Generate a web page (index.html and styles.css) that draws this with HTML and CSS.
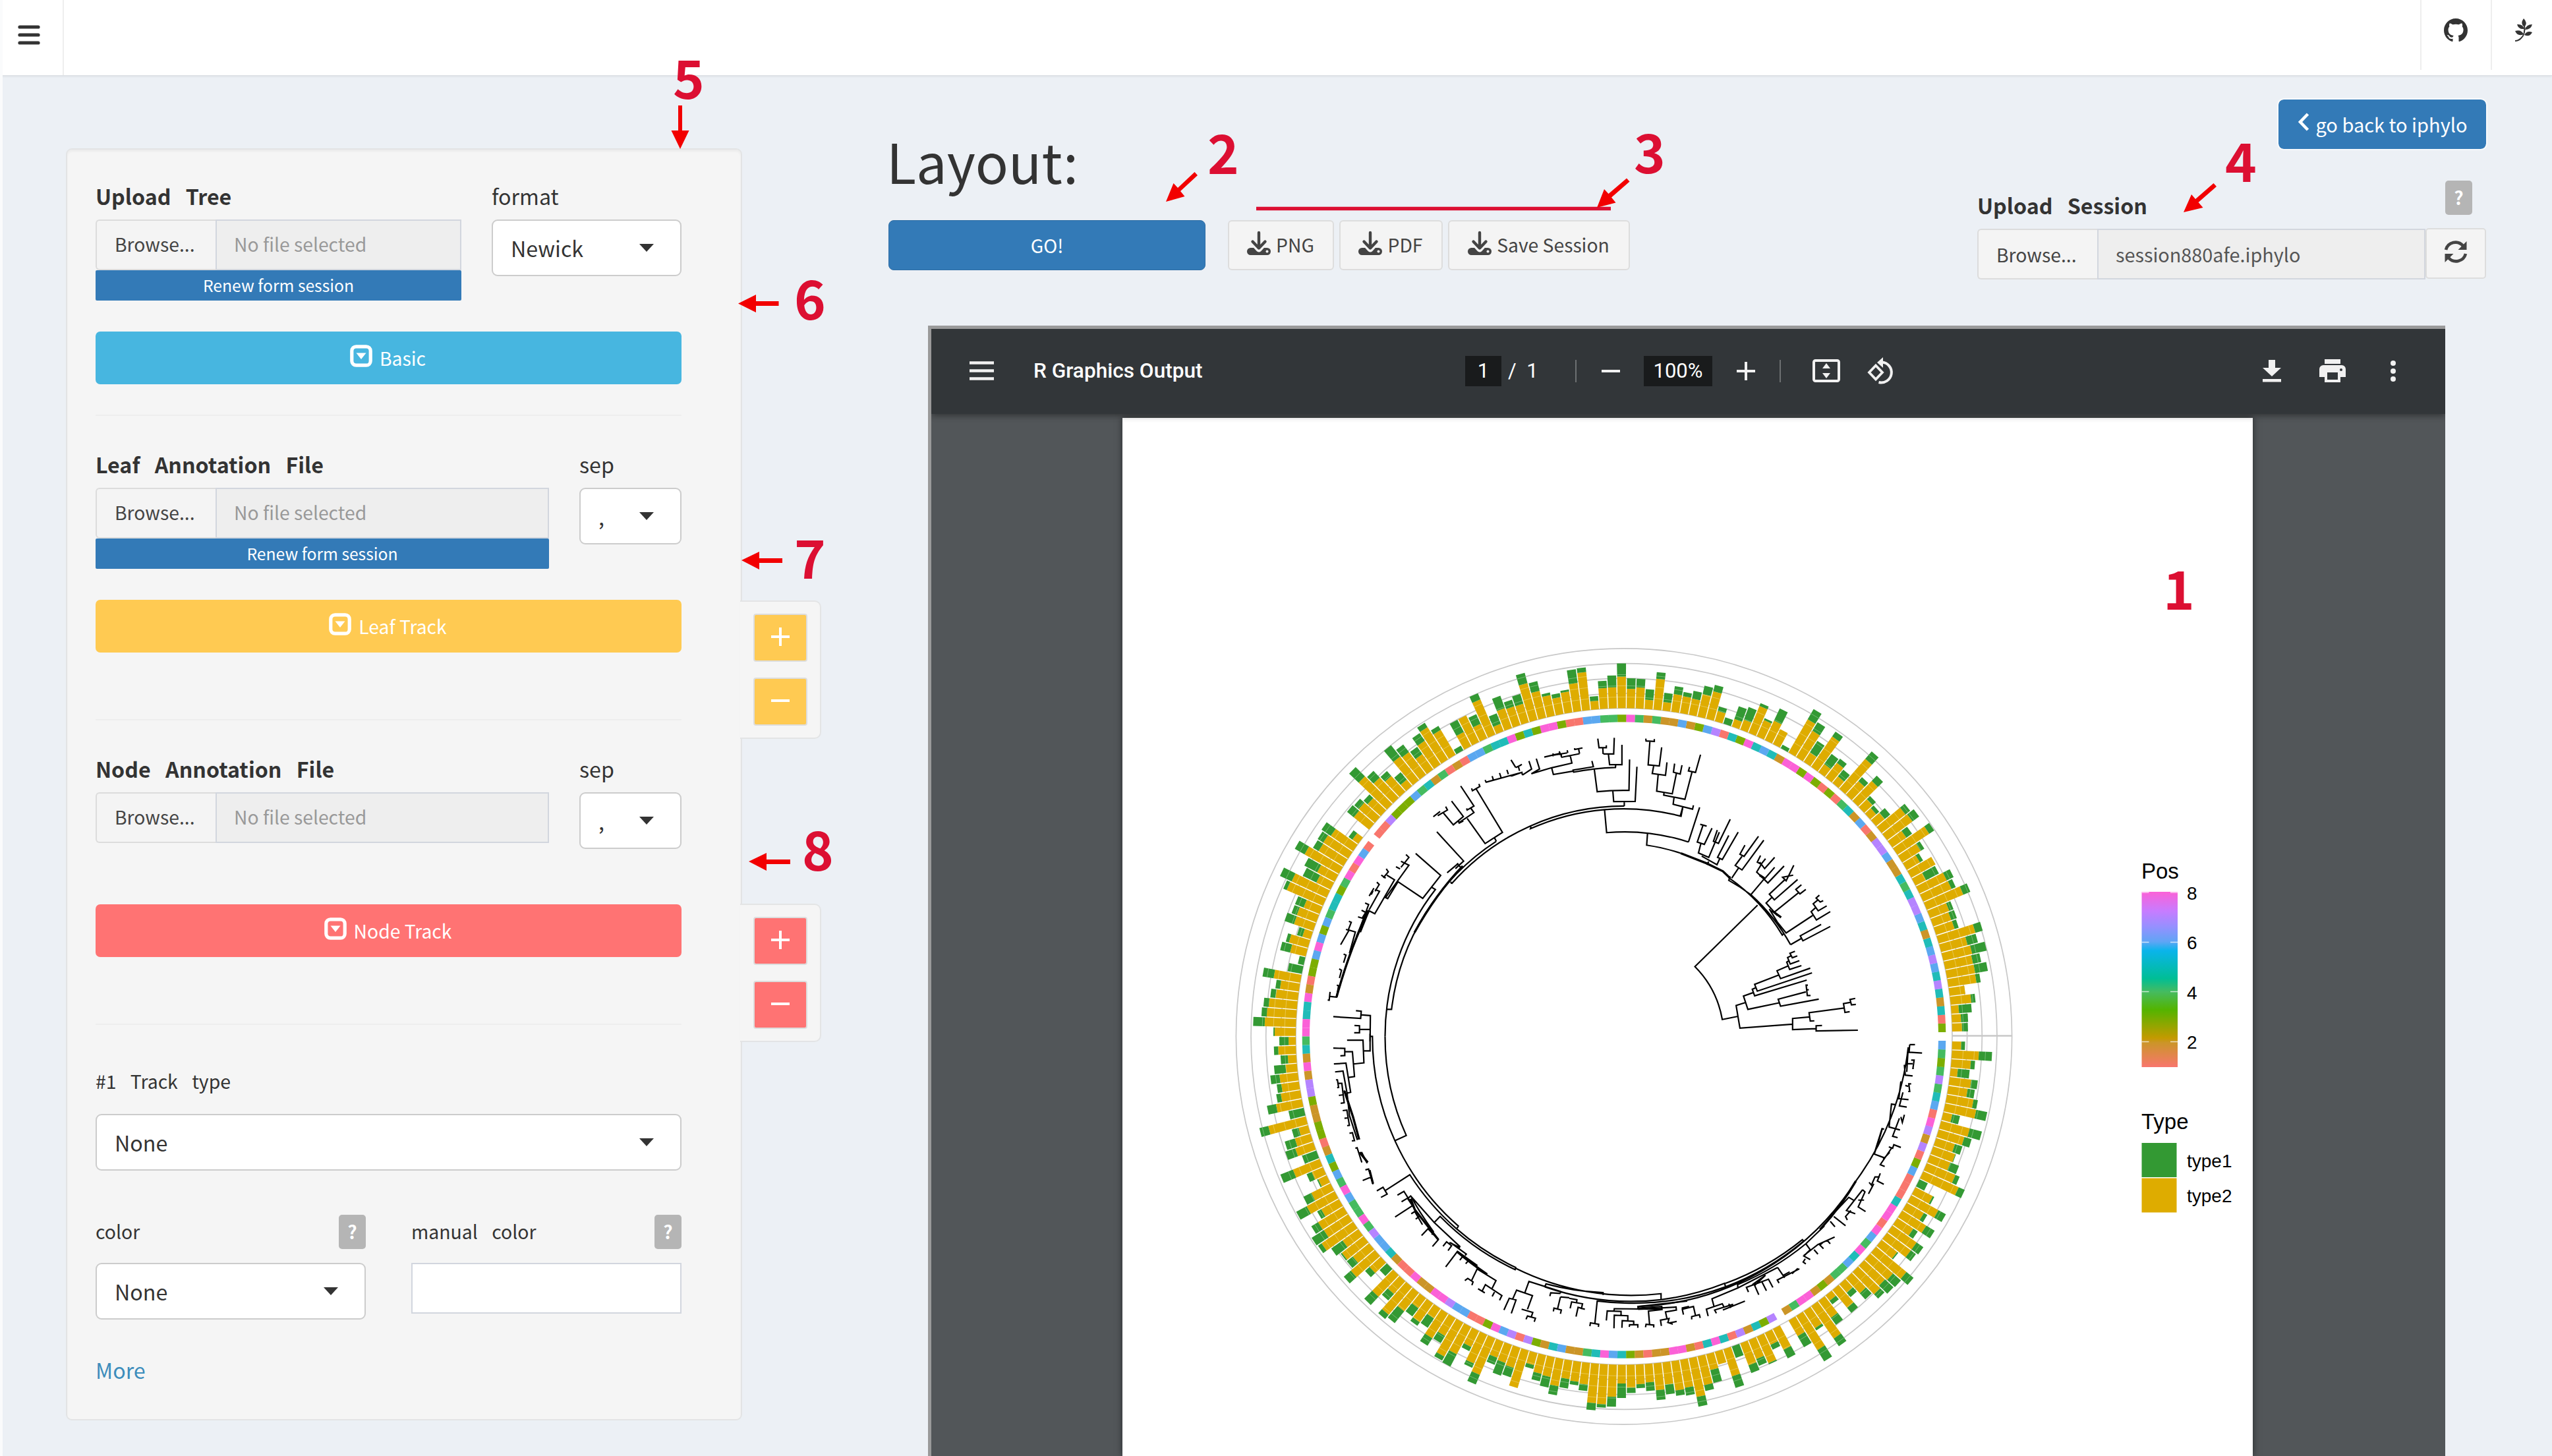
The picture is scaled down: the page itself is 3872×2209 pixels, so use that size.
FILE: index.html
```html
<!DOCTYPE html>
<html lang="en">
<head>
<meta charset="utf-8">
<title>iphylo</title>
<link rel="stylesheet" href="styles.css">
</head>
<body>
<svg class="defs" width="0" height="0">
  <symbol id="i-toggle" viewBox="0 0 34 34"><rect x="2.8" y="2.8" width="28.4" height="28.4" rx="6.5" fill="none" stroke="#fff" stroke-width="5.2"/><path d="M9.5 12.5h15L17 22z" fill="#fff"/></symbol>
  <symbol id="i-down" viewBox="0 0 38 38"><path d="M6.500 26h25a5.500 5.500 0 0 1 0 11h-25a5.500 5.500 0 0 1 0-11z" fill="#444"/><path d="M9 17l10 11 10-11" fill="none" stroke="#f4f4f4" stroke-width="9" stroke-linejoin="round"/><path d="M19 3v22M9.500 16.500L19 26.500l9.500-10" fill="none" stroke="#444" stroke-width="4.400" stroke-linecap="round" stroke-linejoin="round"/><circle cx="31.500" cy="31.500" r="2" fill="#f4f4f4"/></symbol>
</svg>

<header class="topbar">
  <div class="topbar-menu">
    <svg width="34" height="30" viewBox="0 0 34 30"><path d="M3 3h28M3 15h28M3 27h28" stroke="#333" stroke-width="5.200" stroke-linecap="round"/></svg>
  </div>
  <div class="topbar-links">
    <div class="topbar-link"><svg width="36" height="36" viewBox="0 0 16 16"><path fill="#333" d="M8 0C3.580 0 0 3.580 0 8c0 3.540 2.290 6.530 5.470 7.590.4.070.55-.17.55-.38 0-.19-.01-.82-.01-1.490-2.010.37-2.530-.49-2.690-.94-.09-.23-.48-.94-.82-1.130-.28-.15-.68-.52-.01-.53.63-.01 1.080.58 1.230.82.72 1.210 1.870.87 2.330.66.070-.52.280-.87.510-1.070-1.780-.2-3.640-.89-3.640-3.950 0-.87.310-1.590.82-2.150-.08-.2-.36-1.020.08-2.120 0 0 .67-.21 2.200.82.640-.18 1.320-.27 2-.27.680 0 1.360.09 2 .27 1.530-1.040 2.200-.82 2.200-.82.440 1.100.160 1.920.080 2.120.510.560.820 1.270.820 2.150 0 3.070-1.870 3.750-3.650 3.950.290.250.540.730.540 1.480 0 1.070-.01 1.930-.01 2.200 0 .210.150.460.550.380A8.013 8.013 0 0 0 16 8c0-4.420-3.580-8-8-8z"/></svg></div>
    <div class="topbar-link leaf"><svg width="30" height="36" viewBox="0 0 30 36"><g fill="#333"><path d="M14 0q7 7 1 13q-7-5-1-13zM4 9q9-1 11 7q-9 1-11-7zM27 9q-9 0-11 8q9 0 11-8zM1 19q9-3 13 5q-9 4-13-5zM27 21q-8-3-12 4q8 4 12-4z"/></g><path d="M15 10q2 14-5 20q-4 4-9 4" fill="none" stroke="#333" stroke-width="2"/></svg></div>
  </div>
</header>

<main class="layout">
  <section class="sidebar">
    <div class="row row-tree">
      <div class="field">
        <label class="label strong">Upload Tree</label>
        <div class="file"><span class="browse">Browse...</span><span class="filename">No file selected</span></div>
        <button class="renew">Renew form session</button>
      </div>
      <div class="field">
        <label class="label">format</label>
        <div class="select"><span>Newick</span><i class="caret"></i></div>
      </div>
    </div>
    <button class="track basic"><svg width="34" height="34"><use href="#i-toggle"/></svg>Basic</button>
    <hr class="rule near">

    <div class="row row-annot">
      <div class="field">
        <label class="label strong">Leaf Annotation File</label>
        <div class="file"><span class="browse">Browse...</span><span class="filename">No file selected</span></div>
        <button class="renew">Renew form session</button>
      </div>
      <div class="field">
        <label class="label">sep</label>
        <div class="select"><span>,</span><i class="caret"></i></div>
      </div>
    </div>
    <button class="track leaf-track"><svg width="34" height="34"><use href="#i-toggle"/></svg>Leaf Track</button>
    <hr class="rule">

    <div class="row row-annot">
      <div class="field">
        <label class="label strong">Node Annotation File</label>
        <div class="file"><span class="browse">Browse...</span><span class="filename">No file selected</span></div>
      </div>
      <div class="field">
        <label class="label">sep</label>
        <div class="select"><span>,</span><i class="caret"></i></div>
      </div>
    </div>
    <button class="track node-track"><svg width="34" height="34"><use href="#i-toggle"/></svg>Node Track</button>
    <hr class="rule">

    <label class="label small track-type">#1 Track type</label>
    <div class="select"><span>None</span><i class="caret"></i></div>
    <div class="row row-color">
      <div class="field">
        <div class="label-line"><label class="label small">color</label><span class="help">?</span></div>
        <div class="select"><span>None</span><i class="caret"></i></div>
      </div>
      <div class="field">
        <div class="label-line"><label class="label small">manual color</label><span class="help">?</span></div>
        <div class="input"></div>
      </div>
    </div>
    <a class="more">More</a>
  </section>

  <aside class="tabs">
    <div class="tab yellow">
      <button class="step"><svg width="30" height="30"><path d="M1 15h28M15 1v28" stroke="#fff" stroke-width="4"/></svg></button>
      <button class="step"><svg width="30" height="30"><path d="M1 15h28" stroke="#fff" stroke-width="4"/></svg></button>
    </div>
    <div class="tab red">
      <button class="step"><svg width="30" height="30"><path d="M1 15h28M15 1v28" stroke="#fff" stroke-width="4"/></svg></button>
      <button class="step"><svg width="30" height="30"><path d="M1 15h28" stroke="#fff" stroke-width="4"/></svg></button>
    </div>
  </aside>

  <section class="content">
    <div class="controls">
      <div class="actions">
        <h1 class="title">Layout:</h1>
        <div class="buttons">
          <button class="go">GO!</button>
          <button class="btn png"><svg width="38" height="38"><use href="#i-down"/></svg>PNG</button>
          <button class="btn pdf"><svg width="38" height="38"><use href="#i-down"/></svg>PDF</button>
          <button class="btn save"><svg width="38" height="38"><use href="#i-down"/></svg>Save Session</button>
        </div>
      </div>
      <div class="session">
        <button class="back"><svg width="20" height="30" viewBox="0 0 20 30"><path d="M16.500 3L5 15l11.500 12" fill="none" stroke="#fff" stroke-width="4.600"/></svg>go back to iphylo</button>
        <div class="session-head"><label class="label strong">Upload Session</label><span class="help">?</span></div>
        <div class="session-row">
          <div class="file"><span class="browse">Browse...</span><span class="filename dark">session880afe.iphylo</span></div>
          <button class="refresh"><svg width="36" height="36" viewBox="0 0 36 36"><g fill="none" stroke="#444" stroke-width="4.600"><path d="M3 15A15 15 0 0 1 29 9"/><path d="M33 21A15 15 0 0 1 7 27"/></g><path d="M34.500 2v13h-13zM1.500 34V21h13z" fill="#444"/></svg></button>
        </div>
      </div>
    </div>

    <div class="viewer">
      <div class="toolbar">
        <svg class="t-menu" width="37" height="29"><path d="M0 2.500h37M0 14.500h37M0 26.500h37" stroke="#f1f1f1" stroke-width="4.400"/></svg>
        <span class="t-title">R Graphics Output</span>
        <span class="t-box page-no">1</span>
        <span class="t-total">/&nbsp; 1</span>
        <i class="t-sep"></i>
        <svg class="t-minus" width="28" height="28"><path d="M0 14h28" stroke="#f1f1f1" stroke-width="4"/></svg>
        <span class="t-box zoom">100%</span>
        <svg class="t-plus" width="28" height="28"><path d="M0 14h28M14 0v28" stroke="#f1f1f1" stroke-width="4"/></svg>
        <i class="t-sep second"></i>
        <svg class="t-fit" width="42" height="35"><rect x="2" y="2" width="38" height="31" rx="2.500" fill="none" stroke="#f1f1f1" stroke-width="4"/><path d="M21 6l6 8H15zM21 29l6-8H15z" fill="#f1f1f1"/></svg>
        <svg class="t-rotate" width="42" height="42" viewBox="0 0 42 42"><path d="M13 12.500L23 23 13 33.500 3 23z" fill="none" stroke="#f1f1f1" stroke-width="3.800"/><path d="M22 7.500A15.500 15.500 0 1 1 17.500 38" fill="none" stroke="#f1f1f1" stroke-width="4"/><path d="M24 0v16l-9-8z" fill="#f1f1f1"/></svg>
        <span class="t-right">
          <svg width="28" height="34"><path d="M9 0h10v12h9L14 25 0 12h9zM0 29h28v4.500H0z" fill="#f1f1f1"/></svg>
          <svg width="40" height="35"><path d="M8 0h24v7H8zM6 9h28a6 6 0 0 1 6 6v12h-8v8H8v-8H0V15a6 6 0 0 1 6-6z" fill="#f1f1f1"/><path d="M12 20h16v11H12z" fill="#323639"/><circle cx="33" cy="16" r="2" fill="#323639"/></svg>
          <svg width="12" height="34"><g fill="#f1f1f1"><circle cx="6" cy="5" r="4"/><circle cx="6" cy="17" r="4"/><circle cx="6" cy="29" r="4"/></g></svg>
        </span>
      </div>
      <div class="canvas">
        <div class="paper">
          <svg class="chart" viewBox="1703 634 1715 1575">
            <defs>
              <linearGradient id="pos" x1="0" y1="0" x2="0" y2="1">
                <stop offset="0" stop-color="#fb61d7"/><stop offset=".11" stop-color="#c77cff"/><stop offset=".2" stop-color="#9590ff"/><stop offset=".285" stop-color="#5fa5f5"/><stop offset=".335" stop-color="#0ab4eb"/><stop offset=".495" stop-color="#00be95"/><stop offset=".57" stop-color="#45bb60"/><stop offset=".672" stop-color="#53b400"/><stop offset=".835" stop-color="#c49a00"/><stop offset=".86" stop-color="#cb9528"/><stop offset="1" stop-color="#f8766d"/>
              </linearGradient>
            </defs>
            <g id="grid" fill="none" stroke="#c8c8c8" stroke-width="1.700"></g>
            <g id="bars"></g>
            <g id="tiles"></g>
            <g class="tree">
              <g transform="translate(1860 960) scale(.4464 .3954)">
                <path d="M1320 403L1318 465H1283M1264 406L1268 441H1293V432M1281 441L1282 465M1300 465L1304 506H1346V430M1325 506L1324 517A918 1032 0 0 0 1182 535L1180 527L1249 514L1244 492M1252 523L1262 610A836 945 0 0 1 1370 605L1372 486M1315 606L1318 648L1391 647L1397 514M1354 648V665"/>
                <path d="M1107 518L1113 544L1181 531M1038 541L1107 518L1176 500L1170 470M1140 478L1202 464M1140 466V478M1199 447L1202 464M1185 448L1212 442M1185 443L1186 450M1162 461L1160 451M1110 470L1160 461M1082 477L1135 463M1133 455L1138 470M1112 463V474M1038 541L1066 523L1055 483M1008 546L1039 523L1030 492M1008 546L1006 536L885 573M970 550L1008 535M998 530L994 513L1006 505M985 517L1004 507M985 517L969 488M960 543L955 526M935 555L930 538M910 568L905 550M885 575L881 565"/>
                <path d="M835 597L838 606L863 590L860 580M851 600L940 766L881 809L820 712M798 588L843 665L820 680L818 674M833 674L843 690L793 728M790 722L793 730L807 722M767 646L807 705L773 737L738 690M747 667L753 680L720 702M705 706L728 686M912 785L919 800M717 764L808 876L780 905M752 921L790 885M785 885L802 905"/>
                <path d="M645 847L730 931L669 1019L582 953M612 851L622 862L595 900M578 898L592 906M595 877L622 892L543 1016L550 1020L585 955M545 906L552 917L535 940M528 930L543 942M547 930L573 948L506 1078L483 1065M513 957L521 966L507 992M507 985L522 992L487 1063M487 1010L503 980M494 1005L500 990M473 1037L485 1043L452 1145L458 1147L487 1065M461 1065L475 1073L463 1095L449 1090M418 1107L426 1111L416 1140L440 1148L421 1225L427 1222M408 1138L418 1142L390 1197M400 1233L408 1237L400 1266M385 1290L393 1295L386 1325M377 1352L383 1355L376 1398L351 1395M354 1378L351 1410L346 1409M697 975L712 985A812 917 0 0 0 541 1549M919 800A794 896 0 0 0 563 1445H547"/>
                <path class="thick" d="M485 1068Q425 1200 376 1398M805 895Q715 1000 641 1150M482 1065L445 1165"/>
                <path d="M767 963L764 955M767 963A783 884 0 0 1 1354 665M1037 744L1035 752A773 873 0 0 1 1547 704L1552 675M1287 680L1294 767A695 784 0 0 1 1572 803M442 1450L460 1452L458 1480L365 1473M458 1466L491 1469L490 1568M437 1507L454 1508V1535H436M454 1522H490M412 1563H466"/>
              </g>
              <g transform="translate(2460 960) scale(.4464 .3954)">
                <path d="M83 406L84 415L112 417V408M97 416L91 507L129 511L137 440M110 510L105 540L150 547L155 497M125 545L120 608L173 618L187 540M181 502L177 535L200 542L206 508M145 613L144 623L216 639L240 535M232 515L228 530L252 536L269 468M179 632L176 658L242 677L245 662M209 668L200 704M266 670L228 803M89 768L86 815A654 738 0 0 1 202 846M268 735L290 742M278 737L258 803L282 812L308 750M270 810L262 845L297 862L333 765M326 757L313 800L330 808L370 716M273 857L325 890L335 865M365 778L327 862L343 870L397 765M290 890L297 878"/>
                <path d="M420 815L403 850L417 858L466 781M410 858L387 893L410 910L484 796M398 903L375 942M473 855L462 880L475 888L490 867M470 880L487 905L521 862M475 890L460 918L498 960L553 895M521 900L490 940M586 892L560 952L548 938L584 930M558 945L503 1003L520 1025L599 947M512 1015L492 1037L530 1085M520 1072L605 995M612 967L593 985L607 1002L627 985M485 945L440 1005A648 731 0 0 0 365 950L370 935M365 940A638 721 0 0 1 547 1160L552 1154M575 1197A648 731 0 0 0 440 1005M503 1060L530 1110L560 1152L650 1085M673 1007L662 1018L676 1033L686 1028M668 1025L652 1040L669 1067L698 1048M660 1055L645 1070L663 1102L710 1070M575 1197L612 1173M679 1119L608 1163L617 1182L710 1127"/>
                <path class="thick" d="M202 846L290 885L345 915L370 942M510 1065L543 1092M470 930L490 945"/>
                <path d="M463 1045L250 1281A338 382 0 0 1 343 1484L396 1472M422 1419L390 1430L403 1517L582 1502M640 1474L582 1480V1523L662 1519M682 1507L662 1508V1528L804 1525M757 1440L638 1458L642 1490L656 1489M780 1418L755 1423L760 1457L776 1454M795 1403L777 1407L782 1428L797 1426M450 1380L415 1394L430 1445L536 1420M627 1378L533 1406L541 1433L671 1406M634 1352H628L632 1392H643M630 1370H637M457 1362L445 1368L453 1393L630 1333M535 1313L453 1349L462 1375L648 1305M568 1278L529 1297L541 1327L642 1287M570 1258L562 1264L572 1292L612 1277M577 1239L565 1246L574 1271L605 1258M590 1222L573 1230L581 1247L598 1240"/>
              </g>
              <g transform="translate(1860 1560) scale(.4464 .4139)">
                <path d="M490 20V83H470M365 73L404 74V100L389 101M404 86H430L437 177L414 181M412 44H466L469 127L434 131M490 30H498A854 921 0 0 0 790 725L786 733M541 30A812 876 0 0 0 613 393L575 412M367 131L408 128L424 235L412 238M371 160L398 157L413 245M374 189H379L383 217L378 218M381 202H394L402 273L390 275M384 246L400 244M402 228L430 318M412 240L420 320L447 410M397 302L411 300L420 358M403 330L418 328M412 357L422 356M420 385L430 383L437 412L428 413M440 440L446 438L462 492M450 458L462 456L480 495M474 519L485 516L500 572M465 558L495 545"/>
                <path class="thick" d="M403 230L432 325L453 408M455 455L482 492M488 520L500 570"/>
                <path d="M513 596L534 583L548 608L527 620M543 594L625 537A867 935 0 0 0 985 877L983 885A874 942 0 0 1 728 690L708 712M583 612L605 598L635 650L575 692M597 636L617 623L640 660M617 625L628 615L708 712L795 800L793 805M630 617Q655 670 705 745L700 757M630 680L642 672L668 720M645 700L657 690M665 760L687 735L722 775L702 800M738 799L750 783L767 797L755 815M760 785L795 804M765 787L817 828L813 833M747 875L787 818L855 870M855 883L918 925L905 953M795 850L806 835M815 863L826 850M855 880L835 925M812 925L822 917L840 930L836 942M857 955L880 970M870 965L882 940L938 980L930 997M905 983L913 967"/>
                <path class="thick" d="M628 625L642 665L722 775M787 820Q830 860 888 902"/>
                <path d="M945 1033L963 990L986 996L970 1045M975 992L988 960L1042 980L1025 1030M1005 1030L1043 1042L1038 1058M1020 1067L1025 1055L1052 1063L1048 1076M1016 970L1030 928L1137 965V972M985 880A883 952 0 0 0 1479 973V995M1084 948L1088 937A883 955 0 0 0 1282 969V978M1084 948A900 970 0 0 0 1479 995M1101 982L1104 970L1137 972M1137 985L1127 1030M1113 1038L1115 1026L1140 1033L1137 1047M1137 985L1167 988M1170 1027L1175 1003L1212 1010L1208 1030M1190 1057L1197 1023L1220 1030M1167 990L1193 995L1192 1005M1237 1092L1239 1080L1267 1085L1266 1095M1254 1082L1262 1000A905 976 0 0 0 1353 1007M1293 1071L1296 1036L1343 1038V1053M1319 1100L1320 1052L1366 1054V1072M1346 1098L1347 1072L1386 1074V1087M1371 1095L1372 1087H1400V1098M1319 1036L1320 1028L1481 1030V1020L1401 1026V1020L1568 1000"/>
              </g>
              <g transform="translate(2460 1560) scale(.4464 .4139)">
                <path d="M9 1007A905 976 0 0 0 354 948L351 935A905 976 0 0 1 135 995M354 948A925 998 0 0 0 620 780L615 775A920 990 0 0 1 354 935M57 1027V1020A918 990 0 0 0 797 560"/>
                <path class="thick" d="M675 738A935 1008 0 0 0 797 560"/>
                <path d="M797 560A940 1012 0 0 0 975 70M860 460A940 1012 0 0 0 887 368M980 60H998M980 60L978 88L1022 91M975 70L970 160M985 117H995L991 147H994M972 130H990M968 137H962L965 172L990 175M985 204H977L980 232H975M965 210L975 213M950 195L943 258L976 262M957 235L945 285L970 289M930 280L918 278L910 362L947 373M962 317L955 345L950 325M945 330L922 396L939 401M893 370L886 368L859 461L894 475M950 437L926 427L922 440L909 435M918 440L880 500L895 507M912 455L890 480M880 532L870 560L892 572M878 545L862 545L850 575L842 565M858 570L840 607M820 592L828 600L805 655L830 672M805 630L825 630M820 592L765 668L795 680M792 632L773 620L710 692M780 668L762 690L768 703M722 690L762 724M710 708L726 728M627 790L642 812M655 812L668 828M620 833L668 793L725 765M685 785L675 795L687 808M700 778L710 790M642 812L620 835L642 848M625 845L618 857L627 864"/>
                <path d="M312 990L396 952L395 940A930 1003 0 0 0 627 790L690 725M295 1055L289 1030L343 1010L348 1020M323 1045L317 1033L380 1012M312 990L308 992L315 1020M345 1033L420 1000M365 1010L372 1025M432 967L425 950L500 920L515 950M467 977L453 943L490 905M493 962L478 930M445 940L490 905M531 877L555 915M536 934L530 923L605 882M548 907L572 893M580 900L600 880M396 952L531 877M82 1096L84 1085L110 1088V1097M96 1087L92 1037L138 1031L137 1020M136 1091L133 1070L162 1064L158 1080M175 1085L162 1080L188 1075M155 1065L150 1040L187 1033L186 1022L57 1030M211 1050L207 1030L245 1020L252 1053M230 1020L205 1026M239 1067V1057L265 1050L268 1062"/>
              </g>
            </g>
            <g class="legend">
              <text x="3249" y="1333" font-size="33">Pos</text>
              <rect x="3249.500" y="1353" width="54.500" height="266" fill="url(#pos)"/>
              <path d="M3249.500 1354h11M3293 1354h11M3249.500 1429.500h11M3293 1429.500h11M3249.500 1504.500h11M3293 1504.500h11M3249.500 1580.500h11M3293 1580.500h11" stroke="#fff" stroke-opacity=".7" stroke-width="1.500"/>
              <text x="3318" y="1364.500" font-size="28">8</text><text x="3318" y="1440" font-size="28">6</text><text x="3318" y="1516" font-size="28">4</text><text x="3318" y="1591" font-size="28">2</text>
              <text x="3249" y="1713" font-size="33">Type</text>
              <rect x="3249.500" y="1734" width="53" height="52" fill="#339933"/><rect x="3249.500" y="1787.500" width="53" height="52" fill="#deac00"/>
              <text x="3318" y="1771" font-size="28">type1</text><text x="3318" y="1824" font-size="28">type2</text>
            </g>
          </svg>
        </div>
      </div>
    </div>
  </section>
</main>

<svg class="notes" width="3872" height="2209">
  <path d="M1906 316.500h538" stroke="#dc0f32" stroke-width="5.500"/>
  <path d="M1032 226L1018.500 198h10.500v-38h6v38h10.500z" fill="#f20000"/>
  <path d="M1120 460.500L1147 447v10h34.500v7H1147v10z" fill="#f20000"/>
  <path d="M1125 850L1152 837v10h35v7h-35v10z" fill="#f20000"/>
  <path d="M1136 1307L1163 1294v10h36v7h-36v10z" fill="#f20000"/>
  <path d="M1769 306L1780.500 278l6.500 7L1812.500 261l4.500 5L1791 290l6.500 8z" fill="#f20000"/>
  <path d="M2423 315L2434 287l6.500 7L2468 270.500l4.500 5L2445 299.500l6.500 8z" fill="#f20000"/>
  <path d="M3313 322L3325 295l6 7L3358.500 278l4.500 5L3335.500 307l7 8z" fill="#f20000"/>
  <g class="digits">
    <text x="3306" y="925">1</text><text x="1856" y="264">2</text><text x="2503" y="263">3</text><text x="3400" y="276">4</text>
    <text x="1045" y="150">5</text><text x="1229" y="485">6</text><text x="1229" y="878">7</text><text x="1241" y="1321">8</text>
  </g>
</svg>
<script src="chart.js"></script>
</body>
</html>
```
FILE: styles.css
```css
* { box-sizing: border-box; }
body {
  margin: 0;
  width: 3872px;
  height: 2209px;
  overflow: hidden;
  position: relative;
  background: #ecf0f5;
  border-left: 4px solid #fafbfc;
  color: #333;
  font-family: "Noto Sans CJK SC", "Noto Sans", sans-serif;
  font-size: 28.3px;
}
button { font: inherit; padding: 0; margin: 0; border: 0; display: flex; align-items: center; justify-content: center; }
svg { display: block; flex: none; }
.defs { position: absolute; }

.topbar { height: 115px; margin-left: -4px; background: #fff; border-bottom: 1px solid #dce0e5; display: flex; justify-content: space-between; box-shadow: 0 1px 3px rgba(0, 0, 0, .08); }
.topbar-menu { width: 97px; border-right: 2px solid #eee; padding: 38px 0 0 27px; }
.topbar-links { display: flex; height: 106px; }
.topbar-link { width: 107px; border-left: 2px solid #eee; padding: 28px 0 0 34px; }
.topbar-link.leaf { width: 93px; padding-left: 34px; }

.layout { display: flex; align-items: flex-start; padding-left: 96px; }
.sidebar {
  margin-top: 110px;
  width: 1026px;
  height: 1930px;
  padding: 47px 90px 0 43px;
  background: #f5f5f5;
  border: 2px solid #e3e4e5;
  border-radius: 9px;
  box-shadow: inset 0 3px 3px rgba(0, 0, 0, .04);
}
.row { display: grid; justify-content: space-between; }
.row-tree { grid-template-columns: 555px 288px; height: 183px; align-content: start; }
.row-annot { grid-template-columns: 688px 155px; height: 183px; align-content: start; }
.row-color { grid-template-columns: 410px 410px; margin-top: 67px; }
.label { display: block; height: 46px; line-height: 46px; margin-bottom: 13px; font-size: 32.2px; word-spacing: 15px; white-space: nowrap; }
.label.strong { font-weight: 700; }
.label.small { font-size: 28.4px; line-height: 44px; word-spacing: 15px; }
.track-type { margin: 63px 0 26px; }
.label-line { display: flex; justify-content: space-between; align-items: center; height: 52px; margin-bottom: 21px; }
.label-line .label { margin: 0; }
.help { width: 41px; height: 52px; border-radius: 5px; background: #b5b5b5; color: #fff; font-weight: 700; font-size: 28px; line-height: 50px; text-align: center; }

.file { display: flex; height: 77px; line-height: 70px; }
.browse { width: 182px; padding-left: 27px; background: #f4f4f4; border: 2px solid #dcdcdc; border-right: 0; border-radius: 6px 0 0 6px; color: #444; white-space: nowrap; }
.filename { flex: 1; padding-left: 26px; background: #eee; border: 2px solid #d2d6de; color: #999; }
.filename.dark { color: #555; font-size: 28.8px; }
.renew { width: 100%; height: 46px; padding: 0 0 2px; background: #337ab7; color: #fff; font-size: 24.7px; border-radius: 2px; }
.select { height: 86px; padding: 0 40px 0 27px; display: flex; align-items: center; justify-content: space-between; background: #fff; border: 2px solid #ccc; border-radius: 9px; font-size: 32.2px; line-height: 80px; }
.select span { margin-top: -1px; }
.caret { border: 11px solid transparent; border-top: 12px solid #333; border-bottom: 0; }
.input { height: 77px; background: #fff; border: 2px solid #d2d6de; }
.track { width: 889px; height: 80px; margin-top: 46px; padding: 0 2px 2px 0; gap: 11px; border-radius: 7px; color: #fff; }
.track svg { margin-top: -4px; }
.basic { background: #47b6e0; }
.leaf-track { background: #ffca52; }
.node-track { background: #ff7373; }
.rule { margin: 101px 0 50px; border: 0; height: 2px; background: #eee; }
.rule.near { margin-top: 46px; }
.more { display: block; margin-top: 53px; height: 46px; line-height: 46px; font-size: 32.2px; color: #3c8dbc; }

.tabs { width: 122px; margin: 796px 0 0 -3px; }
.tab { width: 123px; height: 210px; padding: 18px 0 0 20px; border: 2px solid #e3e4e5; border-left: 0; border-radius: 0 10px 10px 0; background: #f5f5f5; }
.tab.red { margin-top: 250px; }
.step { width: 82px; height: 73px; margin-bottom: 24px; border: 2px solid #ddd; border-radius: 4px; }
.yellow .step { background: #ffca52; }
.red .step { background: #ff7373; }
.step svg { margin-top: -4px; }

.content { flex: 1; margin-left: 103px; }
.controls { height: 379px; display: flex; justify-content: space-between; padding-right: 100px; }
.title { margin: 68px 0 0 -3px; font-weight: 400; font-size: 83px; line-height: 120px; height: 120px; }
.buttons { display: flex; margin-top: 31px; height: 76px; }
.go { width: 481px; padding-bottom: 2px; background: #337ab7; border-radius: 8px; color: #fff; margin-right: 34px; border: 1px solid #2e6da4; }
.btn { padding: 0 2px 3px 0; background: #f4f4f4; border: 2px solid #ddd; border-radius: 6px; color: #444; gap: 7px; margin-right: 8px; white-space: nowrap; }
.btn svg { margin-top: -3px; }
.png { width: 161px; }
.pdf { width: 157px; }
.save { width: 276px; }
.session { width: 772px; }
.back { width: 315px; height: 75px; margin: 36px 0 0 auto; padding-bottom: 2px; gap: 8px; background: #337ab7; color: #fff; font-size: 29px; border-radius: 8px; outline: 2px solid #f8fafc; white-space: nowrap; }
.back svg { margin-top: -5px; }
.session-head { display: flex; justify-content: space-between; margin-top: 48px; height: 73px; padding-right: 21px; }
.session-head .label { margin-top: 14px; }
.session-row { display: flex; align-items: flex-start; }
.session-row .file { width: 680px; line-height: 73px; }
.refresh { width: 92px; height: 77px; margin-top: -1px; background: #f4f4f4; border: 2px solid #ddd; border-radius: 5px; }
.refresh svg { margin-top: -5px; }

.viewer { width: 2302px; height: 1715px; margin-left: 60px; border: solid #9a9a9a; border-width: 5px 0 0 5px; background: #525659; overflow: hidden; }
.toolbar { position: relative; height: 129px; padding: 0 73px 2px 58px; display: flex; align-items: center; background: #323639; box-shadow: 0 2px 10px rgba(0, 0, 0, .45); color: #fff; font: 31px Roboto, sans-serif; }
.t-title { margin-left: 60px; width: 655px; font-weight: 500; font-size: 31.6px; white-space: nowrap; }
.t-box { height: 46px; line-height: 46px; background: #191b1c; text-align: center; }
.page-no { width: 55px; }
.t-total { margin-left: 10px; width: 102px; }
.t-sep { width: 2px; height: 34px; background: #6d7072; }
.t-minus { margin-left: 38px; }
.zoom { margin-left: 36px; width: 104px; }
.t-plus { margin-left: 37px; }
.second { margin-left: 37px; }
.t-fit { margin-left: 48px; }
.t-rotate { margin-left: 41px; }
.t-right { margin-left: auto; display: flex; align-items: center; gap: 58px; }
.t-right svg:last-child { margin-left: 8px; }
.canvas { padding: 6px 0 0 290px; }
.paper { width: 1715px; height: 1575px; background: #fff; box-shadow: 0 0 10px rgba(0, 0, 0, .5); }
.chart { width: 1715px; height: 1575px; }
.tree path { fill: none; stroke: #000; stroke-width: 2.2px; vector-effect: non-scaling-stroke; }
.tree .thick { stroke-width: 3.4px; }
.legend text { font-family: "Liberation Sans", Arial, sans-serif; fill: #000; }

/* callout numbers and arrows over the page */
.notes { position: absolute; left: -4px; top: 0; pointer-events: none; }
.digits text { font-weight: 700; font-size: 81px; text-anchor: middle; fill: #dc0f32; }
```
FILE: chart.js
```js
const CX = 2464, CY = 1572.5, STEP = 2 * Math.PI / 231, BASE = 498;
const NS = 'http://www.w3.org/2000/svg';

const POS = { R: '#f8766d', O: '#cb9528', L: '#7cae00', G: '#45bb60', T: '#20bcb8', B: '#5ba8f0', P: '#b584ff', M: '#fb61d7' };

// Pos value of each leaf, counter-clockwise from three o'clock; "-" is a missing leaf
const tiles = [
  'LRTOTPTBPB', 'TOTBPPTGTO', 'OBPPORBOTG', 'RLRLMLMMOT', 'BTMLTRPBLO', 'BOOGOGMLGG',
  'BBRRLMMLTL', 'MTTGBBRORG', 'OTGBLLLPRR', '-RBMRMGLTT', 'GBLBMBLLRO', 'MTTMMGTOMO',
  'PPLOOLLROT', 'LBGMBGGMGP', 'BBTORRMOOM', 'MPBBRRLMBP', 'RPLOTBOOGT', 'MBTLOROOMM',
  'ORTMTRPOTL', 'P-OGMMOLOG', 'GBTMGBMRMM', 'TRRRBLRPOP', 'MRBTGPGLGB'
].join('');

// "type2:total" height of each stacked bar
const bars = `15:24 14:24.6 11.6:31 31.5:38 24:24 43:49.5 43.5:63 43:55.7 45:67.6 41.5:57.7
58:69.5 29.5:36 29:38 31:38 60:71.5 47:54 46:57.5 18:40 42:42 23:28.5
33:39.5 58:67 26:36.5 48:60.6 46:55 17:28 12:18 17:24 42:53 28:36
60:75 13:26 28:36 15:34 56:65 17:38 47:62 58:76 0:6 25:25
32.5:53 27:30 44:48.5 16:36.5 12:32.5 0:10 16:23 43:53 35:48 25:37
26:32.5 27:39 13:27 47:57 14:30 32:45 29.6:45.5 48:68 32:50 31.5:42.5
13:20 58:65 43:64 32:35 26:32 32:36 42:57 58:74 29.5:45 30:40.6
32:52 12:29 58:68 24:40 45:45 24:45 0:8 44:51 58:66 43:57
28.5:42 43:57.5 46:68 12.5:27 32:42 42:56 59:79 27:35 32:41 30:43
0:0 11:18 41:58 45:55 44:54 60:77 30:52 24:47 58.5:78 60:65.5
26:40 31.5:40 31:46 13:21.5 30:35 24.5:40 0:9 0:22 41:58 29:36
34:42 43:51 45:53 47.5:65 32:34 11:25 27:33.5 13:24 17.5:35 28:42
27:34 30:37 40:54 0:23.5 58.6:72.5 15:25.6 25:41 29:45 0:23 43.5:64
18.6:27 14:16 32.6:46 48:66 31:38 45:57 44:66 58:64.5 29.5:50.6 41.5:43.7
32:43.5 48:62 23:32 0:15 45:62 26:39 55:63.5 36:59 19:34.5 35:41.5
18:35 44.5:58 31.5:44 59:66 47:68 27:34 48:55 60:76 26:37.5 29:49.5
32:47 59.5:59.5 19:25 29:40.6 30.5:47 42:56 28.5:43 30.5:36 33:43 60:71
61:66 49:64 28.5:50.5 35:43 30:36 28:41 41:56 34:49 45:53 43:55
60:75 45:54 25:45 20:20 43:61.5 0:18.5 35.5:48 31:42 44:46 20:28
35.5:50 0:0 27.5:47 61:81 31:35 60:74 32:45 10:17 35:45 17:26
31:43.5 47:56 43:60.5 46:62 60:74 30:32 45:54.5 45:57.5 29:37 43:58
30:36 47:60 29.5:32 0:14 59:69 47:54 33:47 35.5:36.5 30:42 40.5:52
45:64 14:26 48:65 41:47.6 29.5:40.5 33:43 11:29 29.6:36 41:61 13.7:19.6`
  .split(/\s+/).map(s => s.split(':').map(Number));

function point(r, a) {
  return (CX + r * Math.cos(a)).toFixed(2) + ' ' + (CY - r * Math.sin(a)).toFixed(2);
}
function add(parent, tag, attrs) {
  const el = document.createElementNS(NS, tag);
  for (const k in attrs) el.setAttribute(k, attrs[k]);
  document.getElementById(parent).appendChild(el);
}
function wedge(parent, r1, r2, a1, a2, fill) {
  add(parent, 'path', { d: `M${point(r1, a1)}L${point(r2, a1)}L${point(r2, a2)}L${point(r1, a2)}Z`, fill });
}

for (let i = 0; i < 5; i++) add('grid', 'circle', { cx: CX, cy: CY, r: BASE + i * 22.65 });
add('grid', 'path', { d: `M${CX + BASE} ${CY - 1}H${CX + 588.6}`, 'stroke-width': 2.6 });

for (let k = 1; k <= 230; k++) {
  const a = k * STEP, [low, total] = bars[k - 1], w = STEP * .45;
  if (POS[tiles[k - 1]]) wedge('tiles', 477, 488.3, a - STEP * .505, a + STEP * .505, POS[tiles[k - 1]]);
  if (!total) continue;
  wedge('bars', BASE, BASE + low, a - w, a + w, '#deac00');
  wedge('bars', BASE + low, BASE + total, a - w, a + w, '#339933');
  // faint segment joints inside each stack
  for (let s = 17; s < total - 3; s += 17)
    add('bars', 'path', { d: `M${point(BASE + s, a - w)}L${point(BASE + s, a + w)}`, stroke: '#fff', 'stroke-opacity': .3, 'stroke-width': 1 });
}
```
